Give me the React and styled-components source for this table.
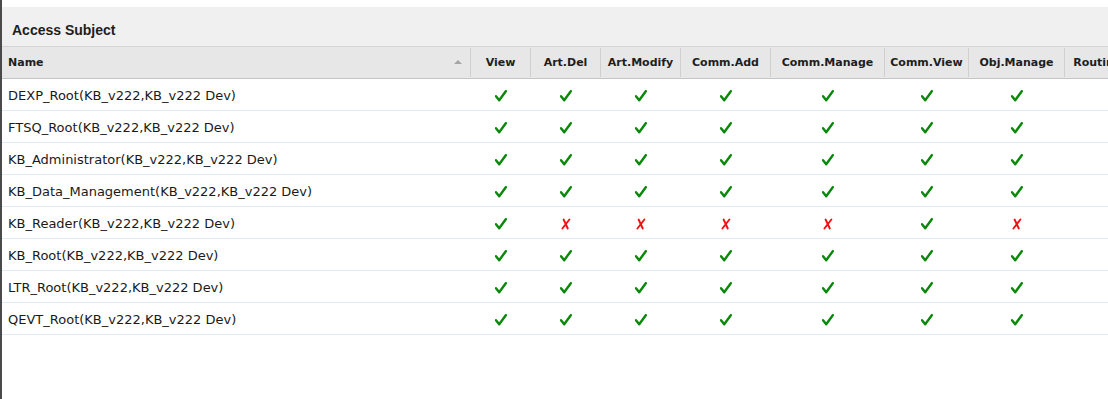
import React from 'react';
import styled, { createGlobalStyle } from 'styled-components';

const GlobalStyle = createGlobalStyle`
  html, body {
    margin: 0;
    padding: 0;
    background: #fff;
  }
  body {
    font-family: "DejaVu Sans", Verdana, sans-serif;
    color: #222;
  }
`;

const columns = [
  { key: 'view', title: 'View', width: 60 },
  { key: 'artDel', title: 'Art.Del', width: 70 },
  { key: 'artModify', title: 'Art.Modify', width: 80 },
  { key: 'commAdd', title: 'Comm.Add', width: 90 },
  { key: 'commManage', title: 'Comm.Manage', width: 114 },
  { key: 'commView', title: 'Comm.View', width: 84 },
  { key: 'objManage', title: 'Obj.Manage', width: 96 },
  { key: 'rout', title: 'Routing', width: 66 },
];

const all = [1, 1, 1, 1, 1, 1, 1, null];

const rows = [
  { name: 'DEXP_Root(KB_v222,KB_v222 Dev)', perms: all },
  { name: 'FTSQ_Root(KB_v222,KB_v222 Dev)', perms: all },
  { name: 'KB_Administrator(KB_v222,KB_v222 Dev)', perms: all },
  { name: 'KB_Data_Management(KB_v222,KB_v222 Dev)', perms: all },
  { name: 'KB_Reader(KB_v222,KB_v222 Dev)', perms: [1, 0, 0, 0, 0, 1, 0, null] },
  { name: 'KB_Root(KB_v222,KB_v222 Dev)', perms: all },
  { name: 'LTR_Root(KB_v222,KB_v222 Dev)', perms: all },
  { name: 'QEVT_Root(KB_v222,KB_v222 Dev)', perms: all },
];

const template = `469px ${columns.map((c) => `${c.width}px`).join(' ')}`;

const Check = () => (
  <svg width="12" height="12" viewBox="0 0 12 12">
    <path
      d="M1 6.2 L4.2 10.2 L10.8 1.2"
      fill="none"
      stroke="#0b870b"
      strokeWidth="2.4"
      strokeLinecap="round"
      strokeLinejoin="round"
    />
  </svg>
);

const Cross = () => (
  <svg width="10" height="12" viewBox="0 0 10 12">
    <path
      d="M2.6 1.5 L6.8 10.5 M8.4 1.5 L1.4 10.5"
      fill="none"
      stroke="#f21010"
      strokeWidth="1.9"
      strokeLinecap="round"
    />
  </svg>
);

const Page = () => (
  <Frame>
    <TitleBar>Access Subject</TitleBar>
    <Grid>
      <HeaderRow>
        <HeaderCell $align="left">
          Name
          <SortArrow />
        </HeaderCell>
        {columns.map((c) => (
          <HeaderCell key={c.key}>{c.title}</HeaderCell>
        ))}
      </HeaderRow>
      {rows.map((r) => (
        <Row key={r.name}>
          <NameCell>{r.name}</NameCell>
          {r.perms.map((p, i) => (
            <MarkCell key={columns[i].key}>
              {p === 1 && <Check />}
              {p === 0 && <Cross />}
            </MarkCell>
          ))}
        </Row>
      ))}
    </Grid>
  </Frame>
);

const App = () => (
  <>
    <GlobalStyle />
    <Page />
  </>
);

const Frame = styled.div`
  height: 399px;
  overflow: hidden;
  border-left: 2px solid #4a4a4a;
  padding-top: 7px;
  box-sizing: border-box;
`;

const TitleBar = styled.div`
  height: 39px;
  background: #f0f0f0;
  display: flex;
  align-items: center;
  padding-left: 10px;
  padding-top: 6px;
  box-sizing: border-box;
  font-family: "Liberation Sans", Arial, sans-serif;
  font-size: 14px;
  font-weight: bold;
  color: #1e1e1e;
`;

const Grid = styled.div`
  display: flex;
  flex-direction: column;
  width: max-content;
`;

const HeaderRow = styled.div`
  display: grid;
  grid-template-columns: ${template};
  height: 33px;
  background: #e7e7e7;
  border-top: 1px solid #d4d4d4;
  border-bottom: 1px solid #c4c4c4;
  box-sizing: border-box;
  align-items: center;
`;

const HeaderCell = styled.div`
  position: relative;
  height: 29px;
  display: flex;
  align-items: center;
  justify-content: ${(p) => (p.$align === 'left' ? 'flex-start' : 'center')};
  padding-left: ${(p) => (p.$align === 'left' ? '6px' : '0')};
  border-right: 1px solid #cfcfcf;
  font-size: 11px;
  font-weight: bold;
  color: #1e1e1e;
  white-space: nowrap;
  overflow: hidden;
`;

const SortArrow = styled.span`
  position: absolute;
  right: 8px;
  top: 12px;
  width: 0;
  height: 0;
  border-left: 4px solid transparent;
  border-right: 4px solid transparent;
  border-bottom: 4px solid #a6a6a6;
`;

const Row = styled.div`
  display: grid;
  grid-template-columns: ${template};
  height: 32px;
  border-bottom: 1px solid #e2ebf4;
  box-sizing: border-box;
  align-items: center;
`;

const NameCell = styled.div`
  padding-left: 6px;
  padding-top: 2px;
  font-size: 13px;
  color: #1a1a1a;
  white-space: nowrap;
`;

const MarkCell = styled.div`
  display: flex;
  justify-content: center;
  align-items: center;
  padding-top: 2px;
`;

export default App;
